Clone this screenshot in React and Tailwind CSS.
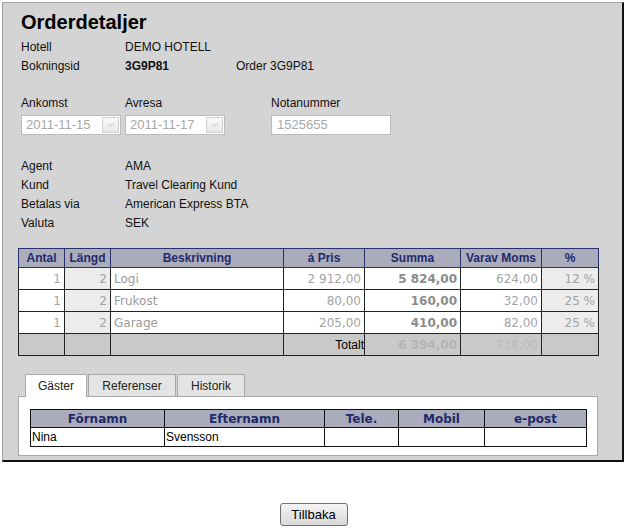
import { ChevronDown } from 'lucide-react';

const info = [
    ['Agent', 'AMA'],
    ['Kund', 'Travel Clearing Kund'],
    ['Betalas via', 'American Express BTA'],
    ['Valuta', 'SEK'],
];

const rows = [
    { antal: 1, langd: 2, text: 'Logi', pris: '2 912,00', summa: '5 824,00', moms: '624,00', pct: '12 %' },
    { antal: 1, langd: 2, text: 'Frukost', pris: '80,00', summa: '160,00', moms: '32,00', pct: '25 %' },
    { antal: 1, langd: 2, text: 'Garage', pris: '205,00', summa: '410,00', moms: '82,00', pct: '25 %' },
];

function DateSelect({ value }) {
    return (
        <div className="w-[100px] h-[20px] border border-[#bcbcbc] bg-white flex items-center justify-between pl-[4px] pr-[1px]">
            <span className="text-[13px] text-[#a8a8a8]">{value}</span>
            <span className="w-[17px] h-[16px] border border-[#d0d0d0] bg-gradient-to-b from-[#fafafa] to-[#e6e6e6] flex items-center justify-center">
                <ChevronDown size={10} strokeWidth={1.5} className="text-[#a8a8a8]" />
            </span>
        </div>
    );
}

export default function App() {
    const th = 'border border-[#27306a] bg-[#aaabbb] text-[#1f2a6a] font-bold text-[12px] h-[19px] p-0';
    const td = 'border border-[#222] h-[22px] px-[3px] text-[12px]';

    return (
        <div className="w-[626px] h-[531px] bg-white font-['Liberation_Sans',Arial,sans-serif] text-[12px] text-[#111]">
            <div className="ml-[2px] pt-[2px]">
                <div className="w-[622px] h-[460px] bg-[#d4d4d4] border-t border-l border-[#a4a4a4] border-r-2 border-b-2 border-r-[#111] border-b-[#111] pl-[15px]">
                    <h1 className="pt-[7px] pl-[3px] h-[34px] text-[20px] font-bold leading-[24px] text-black">Orderdetaljer</h1>

                    <div className="pl-[3px]">
                        <div className="flex h-[19px] items-center">
                            <span className="w-[104px]">Hotell</span>
                            <span>DEMO HOTELL</span>
                        </div>
                        <div className="flex h-[19px] items-center">
                            <span className="w-[104px]">Bokningsid</span>
                            <span className="w-[111px] font-bold">3G9P81</span>
                            <span>Order 3G9P81</span>
                        </div>
                    </div>

                    <div className="flex pl-[3px] mt-[18px]">
                        <div className="w-[104px]">
                            <div className="h-[19px] flex items-center">Ankomst</div>
                            <div className="mt-[3px]"><DateSelect value="2011-11-15" /></div>
                        </div>
                        <div className="w-[146px]">
                            <div className="h-[19px] flex items-center">Avresa</div>
                            <div className="mt-[3px]"><DateSelect value="2011-11-17" /></div>
                        </div>
                        <div>
                            <div className="h-[19px] flex items-center">Notanummer</div>
                            <div className="mt-[3px] w-[120px] h-[20px] border border-[#bcbcbc] bg-white flex items-center pl-[5px] text-[13px] text-[#a8a8a8]">1525655</div>
                        </div>
                    </div>

                    <div className="pl-[3px] mt-[21px]">
                        {info.map(([k, v]) => (
                            <div key={k} className="flex h-[19px] items-center">
                                <span className="w-[104px]">{k}</span>
                                <span>{v}</span>
                            </div>
                        ))}
                    </div>

                    <table className="mt-[16px] border-collapse table-fixed w-[580px]">
                        <colgroup>
                            <col className="w-[46px]" />
                            <col className="w-[46px]" />
                            <col className="w-[173px]" />
                            <col className="w-[81px]" />
                            <col className="w-[96px]" />
                            <col className="w-[81px]" />
                            <col className="w-[57px]" />
                        </colgroup>
                        <thead>
                            <tr>
                                <th className={th}>Antal</th>
                                <th className={th}>Längd</th>
                                <th className={th}>Beskrivning</th>
                                <th className={th}>á Pris</th>
                                <th className={th}>Summa</th>
                                <th className={th}>Varav Moms</th>
                                <th className={th}>%</th>
                            </tr>
                        </thead>
                        <tbody className="font-['DejaVu_Sans',Verdana,sans-serif] text-[#a4a4a4]">
                            {rows.map((r) => (
                                <tr key={r.text}>
                                    <td className={`${td} text-right bg-white`}>{r.antal}</td>
                                    <td className={`${td} text-right bg-[#ececec]`}>{r.langd}</td>
                                    <td className={`${td} text-left bg-white text-[#9a9a9a]`}>{r.text}</td>
                                    <td className={`${td} text-right bg-white`}>{r.pris}</td>
                                    <td className={`${td} text-right bg-white font-bold text-[#8c8c8c]`}>{r.summa}</td>
                                    <td className={`${td} text-right bg-white`}>{r.moms}</td>
                                    <td className={`${td} text-right bg-[#ececec]`}>{r.pct}</td>
                                </tr>
                            ))}
                            <tr className="bg-[#c9c9c9]">
                                <td className={td}></td>
                                <td className={td}></td>
                                <td className={td}></td>
                                <td className={`${td} text-right font-['Liberation_Sans',Arial,sans-serif] text-black pr-0`}>Totalt</td>
                                <td className={`${td} text-right font-bold text-[#b4b4b4]`}>6 394,00</td>
                                <td className={`${td} text-right text-[#bababa]`}>738,00</td>
                                <td className={td}></td>
                            </tr>
                        </tbody>
                    </table>

                    <div className="mt-[17px] w-[580px]">
                        <div className="flex pl-[7px] h-[23px] items-end">
                            <div className="h-[23px] w-[62px] bg-white border border-b-0 border-[#a8a8a8] flex items-center justify-center text-[#222] relative top-[1px]">Gäster</div>
                            <div className="h-[22px] w-[88px] ml-[1px] bg-[#e4e4e4] border border-b-0 border-[#a8a8a8] flex items-center justify-center text-[#222]">Referenser</div>
                            <div className="h-[22px] w-[68px] ml-[1px] bg-[#e4e4e4] border border-b-0 border-[#a8a8a8] flex items-center justify-center text-[#222]">Historik</div>
                        </div>
                        <div className="bg-white border border-[#a8a8a8] h-[60px] px-[11px] pt-[12px]">
                            <table className="border-collapse table-fixed w-[556px]">
                                <colgroup>
                                    <col className="w-[134px]" />
                                    <col className="w-[160px]" />
                                    <col className="w-[74px]" />
                                    <col className="w-[86px]" />
                                    <col className="w-[102px]" />
                                </colgroup>
                                <thead>
                                    <tr className="font-['DejaVu_Sans',Verdana,sans-serif]">
                                        {['Förnamn', 'Efternamn', 'Tele.', 'Mobil', 'e-post'].map((h) => (
                                            <th key={h} className="border border-[#111] bg-[#aaabbb] text-[#1f2a6a] font-bold text-[12px] h-[18px] p-0 leading-[14px]">{h}</th>
                                        ))}
                                    </tr>
                                </thead>
                                <tbody>
                                    <tr>
                                        <td className="border border-[#111] h-[17px] px-[1px] text-black">Nina</td>
                                        <td className="border border-[#111] h-[17px] px-[1px] text-black">Svensson</td>
                                        <td className="border border-[#111]"></td>
                                        <td className="border border-[#111]"></td>
                                        <td className="border border-[#111]"></td>
                                    </tr>
                                </tbody>
                            </table>
                        </div>
                    </div>
                </div>
            </div>

            <div className="flex justify-center mt-[41px] pl-[1px]">
                <button className="w-[68px] h-[23px] rounded-[3px] border border-[#707070] bg-gradient-to-b from-[#f4f4f4] to-[#d8d8d8] text-[13px] text-black">Tillbaka</button>
            </div>
        </div>
    );
}
